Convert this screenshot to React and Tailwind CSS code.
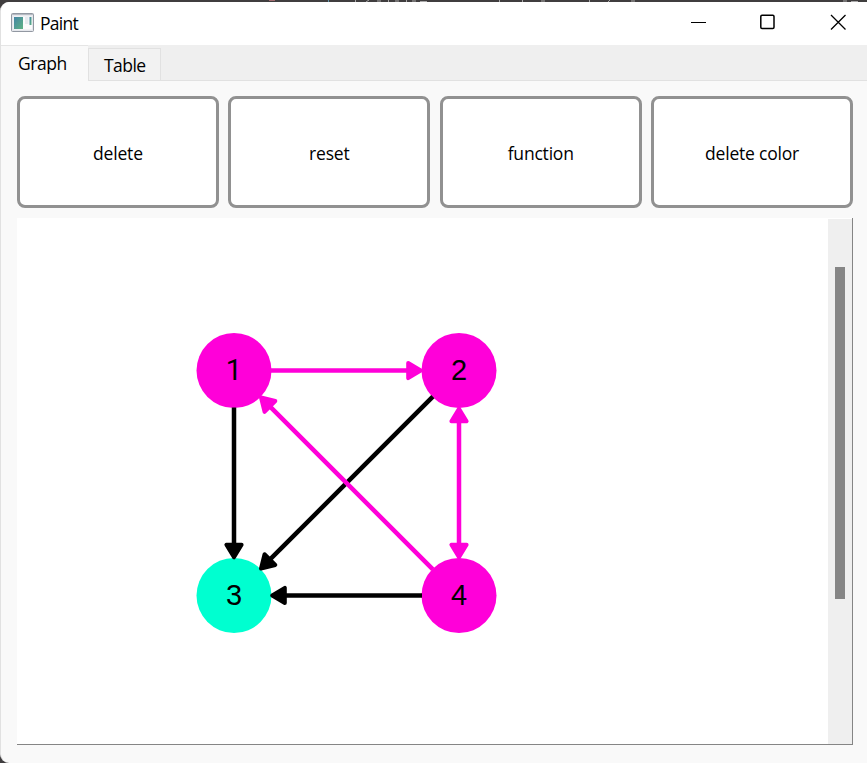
const PINK = '#ff00d9';
const CYAN = '#00ffd0';

const nodes = [
  { id: 1, x: 217, y: 152.5, fill: PINK },
  { id: 2, x: 442, y: 152.5, fill: PINK },
  { id: 3, x: 217, y: 377.5, fill: CYAN },
  { id: 4, x: 442, y: 377.5, fill: PINK },
];

const edges = [
  { from: 1, to: 2, color: PINK },
  { from: 1, to: 3, color: '#000' },
  { from: 2, to: 3, color: '#000' },
  { from: 4, to: 1, color: PINK },
  { from: 4, to: 3, color: '#000' },
  { from: 2, to: 4, color: PINK, both: true },
];

function Head({ node, angle, color }) {
  return (
    <path
      d="M38.2 0L50.8 -7.6V7.6Z"
      transform={`translate(${node.x} ${node.y}) rotate(${angle})`}
      fill={color}
      stroke={color}
      strokeWidth="4"
      strokeLinejoin="round"
    />
  );
}

function Edge({ from, to, color, both }) {
  const a = nodes[from - 1];
  const b = nodes[to - 1];
  const angle = (Math.atan2(a.y - b.y, a.x - b.x) * 180) / Math.PI;
  const length = Math.hypot(a.x - b.x, a.y - b.y);
  return (
    <g>
      <path
        d={`M45 0H${both ? length - 45 : length - 37}`}
        transform={`translate(${b.x} ${b.y}) rotate(${angle})`}
        stroke={color}
        strokeWidth="4.5"
      />
      <Head node={b} angle={angle} color={color} />
      {both && <Head node={a} angle={angle + 180} color={color} />}
    </g>
  );
}

function Graph() {
  return (
    <svg width="811" height="525" viewBox="0 0 811 525" className="block shrink-0">
      {nodes.map((n) => (
        <circle key={n.id} cx={n.x} cy={n.y} r="37.5" fill={n.fill} />
      ))}
      {edges.map((e) => (
        <Edge key={`${e.from}-${e.to}`} {...e} />
      ))}
      {nodes.map((n) => (
        <text
          key={n.id}
          x={n.x}
          y={n.y + 9.5}
          textAnchor="middle"
          className={
            n.id === 1
              ? "font-['Roboto',sans-serif] text-[29px]"
              : "font-['Liberation_Sans',sans-serif] text-[29px]"
          }
        >
          {n.id}
        </text>
      ))}
    </svg>
  );
}

function AppIcon() {
  return (
    <svg width="23" height="19" viewBox="0 0 23 19" className="block">
      <defs>
        <linearGradient id="screen" x1="0" y1="0" x2="1" y2="1">
          <stop offset="0" stopColor="#4585a5" />
          <stop offset="1" stopColor="#5eb384" />
        </linearGradient>
      </defs>
      <rect x="0.5" y="0.5" width="22" height="18" rx="1" fill="#e5e7ec" stroke="#9298a2" />
      <path d="M1 1.5H22" stroke="#b6bac2" />
      <rect x="2.5" y="3.5" width="18.5" height="13" fill="#fbfbfc" />
      <rect x="3" y="4" width="9" height="12" fill="url(#screen)" />
      <rect x="14" y="4" width="3.5" height="7" fill="#e6eaef" />
      <rect x="18.5" y="4" width="2" height="8" fill="url(#screen)" />
    </svg>
  );
}

function WindowControls() {
  return (
    <svg width="156" height="16" viewBox="0 0 156 16" className="mr-[20px] block" fill="none" stroke="#000">
      <path d="M0 8.5H15" strokeWidth="1" />
      <rect x="69.8" y="1.3" width="13.2" height="13.2" rx="1.2" strokeWidth="1.5" />
      <path d="M140 1L154.5 15.5M154.5 1L140 15.5" strokeWidth="1.3" />
    </svg>
  );
}

// Sliver of the window lying behind, visible above the title bar.
function BackgroundStrip() {
  return (
    <svg width="867" height="2" viewBox="0 0 867 2" className="block" stroke="#a9a8a8" strokeWidth="1">
      <path d="M355.5 0V2M366 2L369 0M377 1H381M388.5 0V2M395 1H399M406.5 0V2M412 1H416M420 1.5H427M499.500 0V2M522.500 0V2M541 1H545M589.500 0V2M610 0L608 2M631 1H635M843 1H847M851 1.500H858" />
      <path d="M269 .5H275" stroke="#a26c70" />
      <path d="M328.500 0V2" stroke="#6295ac" />
    </svg>
  );
}

export default function App() {
  return (
    <div className="h-[763px] w-[867px] overflow-hidden bg-[#403e3f] font-['Open_Sans','Noto_Sans',sans-serif] text-[17.5px] leading-6 text-black">
      <BackgroundStrip />
      <div className="flex h-[761px] flex-col overflow-hidden rounded-tl-[9px] rounded-bl-[9px] border-l border-[#e1e1e1] bg-[#f9f9f9]">
        <header className="flex h-[43px] shrink-0 items-center justify-between bg-white pl-[10px]">
          <div className="flex items-center gap-[6px] pb-[3px]">
            <AppIcon />
            <span className="pt-[2px] tracking-[-0.75px]">Paint</span>
          </div>
          <div className="pb-[3px]">
            <WindowControls />
          </div>
        </header>
        <nav className="flex h-[36px] shrink-0 items-end bg-[#efefef]">
          <div className="h-[36px] w-[87px] border-t border-[#e5e5e5] bg-[#f9f9f9] pt-[5px] pl-[17px] tracking-[-0.45px]">Graph</div>
          <div className="h-[33px] w-[73px] border border-[#e1e1e1] bg-[#f2f2f2] pt-[4px] pl-[15px] tracking-[-0.55px]">Table</div>
          <div className="h-full flex-1 border-b border-[#e1e1e1]" />
        </nav>
        <main className="flex flex-col pt-[15px] pr-[14px] pl-[16px]">
          <div className="grid grid-cols-4 gap-[9.5px]">
            {['delete', 'reset', 'function', 'delete color'].map((label) => (
              <button
                key={label}
                className="flex h-[112px] items-center justify-center rounded-lg border-[3px] border-[#919191] bg-white pt-[2px] tracking-[-0.2px]"
              >
                {label}
              </button>
            ))}
          </div>
          <section className="mt-[10px] flex h-[527px] border-r border-b border-[#858585] bg-white">
            <Graph />
            <div className="mt-px flex-1 bg-[#efefef] pt-[48px] pl-[7px]">
              <div className="h-[332px] w-[10px] bg-[#858585]" />
            </div>
          </section>
        </main>
      </div>
    </div>
  );
}
